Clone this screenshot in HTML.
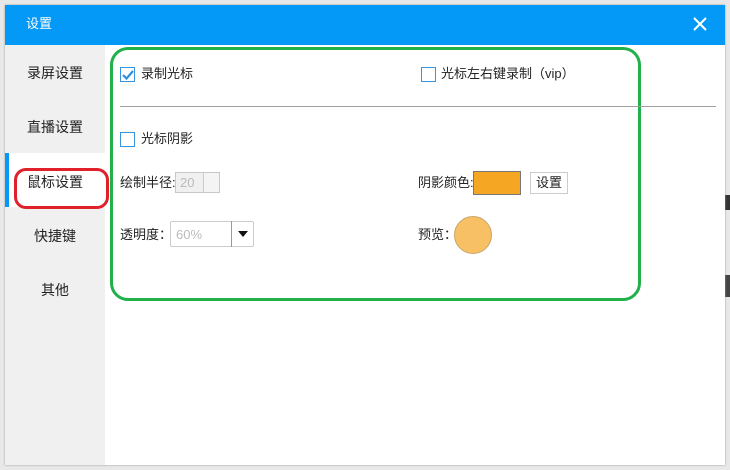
<!DOCTYPE html><html><head><meta charset="utf-8"><style>
*{margin:0;padding:0;box-sizing:border-box}
body{width:730px;height:470px;background:#e8e8e8;position:relative;overflow:hidden;font-family:"Liberation Sans","Noto Sans CJK SC",sans-serif;font-size:13px;color:#222}
.abs{position:absolute}
#dlg{left:5px;top:5px;width:720px;height:460px;background:#fff;box-shadow:0 0 2px #999}
#title{left:5px;top:5px;width:720px;height:40px;background:#0499f6;color:#fff;font-size:13px;line-height:38px;padding-left:21px}
#side{left:5px;top:45px;width:100px;height:420px;background:#f0f0f0}
.nav{position:absolute;left:5px;width:100px;text-align:center;font-size:14px;color:#222;line-height:18px}
.cb{position:absolute;width:15px;height:15px;border:1px solid #3a94dc;background:#fff}
.t{position:absolute;font-size:13px;white-space:nowrap;line-height:16px}
</style></head><body>
<div class="abs" style="left:725px;top:195px;width:5px;height:15px;background:#333"></div>
<div class="abs" style="left:725px;top:275px;width:5px;height:22px;background:#444"></div>
<div class="abs" id="dlg"></div>
<div class="abs" id="title">设置</div>
<svg class="abs" style="left:692px;top:16px" width="16" height="16"><path d="M2 2L14 14M14 2L2 14" stroke="#fff" stroke-width="2"/></svg>
<div class="abs" id="side"></div>
<div class="abs" style="left:5px;top:153px;width:100px;height:54px;background:#fff"></div>
<div class="abs" style="left:5px;top:153px;width:4px;height:54px;background:#0499f6"></div>
<div class="nav" style="top:64px">录屏设置</div>
<div class="nav" style="top:118px">直播设置</div>
<div class="nav" style="top:173px">鼠标设置</div>
<div class="nav" style="top:227px">快捷键</div>
<div class="nav" style="top:281px">其他</div>
<div class="abs" style="left:14px;top:168px;width:95px;height:41px;border:3px solid #e0202a;border-radius:12px"></div>
<div class="abs" style="left:110px;top:47px;width:531px;height:254px;border:3px solid #22b04b;border-radius:18px"></div>
<div class="cb" style="left:120px;top:67px"></div>
<svg class="abs" style="left:121px;top:68px" width="14" height="14"><path d="M2 7L5.5 10.5L12 3" stroke="#2f8fd8" stroke-width="2.2" fill="none"/></svg>
<div class="t" style="left:141px;top:66px">录制光标</div>
<div class="cb" style="left:421px;top:67px"></div>
<div class="t" style="left:441px;top:66px">光标左右键录制（vip）</div>
<div class="abs" style="left:120px;top:106px;width:596px;height:1px;background:#a0a0a0"></div>
<div class="cb" style="left:120px;top:132px"></div>
<div class="t" style="left:141px;top:131px">光标阴影</div>
<div class="t" style="left:120px;top:175px">绘制半径:</div>
<div class="abs" style="left:175px;top:172px;width:45px;height:21px;border:1px solid #c8c8c8;background:#f0f0f0;color:#bbb;padding:2px 0 0 4px;line-height:15px">20</div>
<div class="abs" style="left:203px;top:173px;width:16px;height:19px;border-left:1px solid #ccc;background:#f4f4f4"></div>
<div class="t" style="left:120px;top:227px">透明度：</div>
<div class="abs" style="left:170px;top:221px;width:84px;height:26px;border:1px solid #ccc;border-radius:2px;color:#bbb;padding:5px 0 0 5px;line-height:15px">60%</div>
<div class="abs" style="left:231px;top:221px;width:1px;height:26px;background:#999"></div>
<svg class="abs" style="left:237px;top:230px" width="12" height="8"><path d="M1 1H11L6 7Z" fill="#111"/></svg>
<div class="t" style="left:418px;top:175px">阴影颜色:</div>
<div class="abs" style="left:473px;top:171px;width:48px;height:24px;background:#f5a623;border:1px solid #777"></div>
<div class="abs" style="left:530px;top:172px;width:38px;height:22px;border:1px solid #ccc;text-align:center;line-height:20px">设置</div>
<div class="t" style="left:418px;top:227px">预览：</div>
<div class="abs" style="left:454px;top:216px;width:38px;height:38px;border-radius:50%;background:#f8c064;border:1px solid #c9a66b"></div>
</body></html>
